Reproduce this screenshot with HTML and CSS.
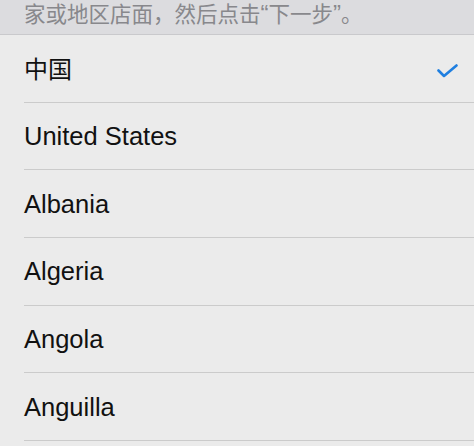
FILE: index.html
```html
<!DOCTYPE html>
<html lang="zh">
<head>
<meta charset="utf-8">
<title>国家或地区</title>
<link rel="stylesheet" href="styles.css">
</head>
<body>
<div class="screen">
  <header class="hint">家或地区店面，然后点击<span class="q">“</span>下一步<span class="q">”</span>。</header>
  <ul class="list">
    <li class="item"><div class="cell"><span class="name cjk">中国</span>
      <svg class="check" width="21" height="14" viewBox="0 0 21 14" aria-hidden="true"><path d="M1.5 6.5 L7 12 L19.5 1.5" fill="none" stroke="#1f7fe0" stroke-width="2.6" stroke-linecap="round" stroke-linejoin="round"/></svg>
    </div></li>
    <li class="item"><div class="cell"><span class="name">United States</span></div></li>
    <li class="item"><div class="cell"><span class="name">Albania</span></div></li>
    <li class="item"><div class="cell"><span class="name">Algeria</span></div></li>
    <li class="item"><div class="cell"><span class="name">Angola</span></div></li>
    <li class="item"><div class="cell"><span class="name">Anguilla</span></div></li>
  </ul>
</div>
</body>
</html>
```

FILE: styles.css
```css
html, body {
  margin: 0;
  padding: 0;
  background: #ebebeb;
}
body {
  width: 474px;
  height: 446px;
  overflow: hidden;
  font-family: "Liberation Sans", "Noto Sans CJK SC", sans-serif;
}
.screen {
  display: flex;
  flex-direction: column;
}
.hint {
  box-sizing: border-box;
  height: 35px;
  padding: 2px 0 0 24px;
  background: #dcdcdf;
  border-bottom: 1px solid #c9c9cc;
  color: #88888c;
  font-family: "Noto Sans CJK SC", sans-serif;
  font-size: 21.5px;
  line-height: 21.5px;
  white-space: nowrap;
}
.q {
  font-family: "Liberation Sans", sans-serif;
  font-size: 24px;
}
.list {
  list-style: none;
  margin: 0;
  padding: 0;
}
.item {
  padding-left: 24px;
  background: #ebebeb;
}
.cell {
  box-sizing: border-box;
  height: 67.7px;
  display: flex;
  align-items: center;
  justify-content: space-between;
  padding-right: 16px;
  border-bottom: 1px solid #cbcbcb;
}
.name {
  color: #111111;
  font-size: 25.5px;
  line-height: 30px;
}
.cjk {
  font-family: "Noto Sans CJK SC", sans-serif;
  font-size: 24px;
}
.check {
  display: block;
  margin-top: 5px;
}
```
